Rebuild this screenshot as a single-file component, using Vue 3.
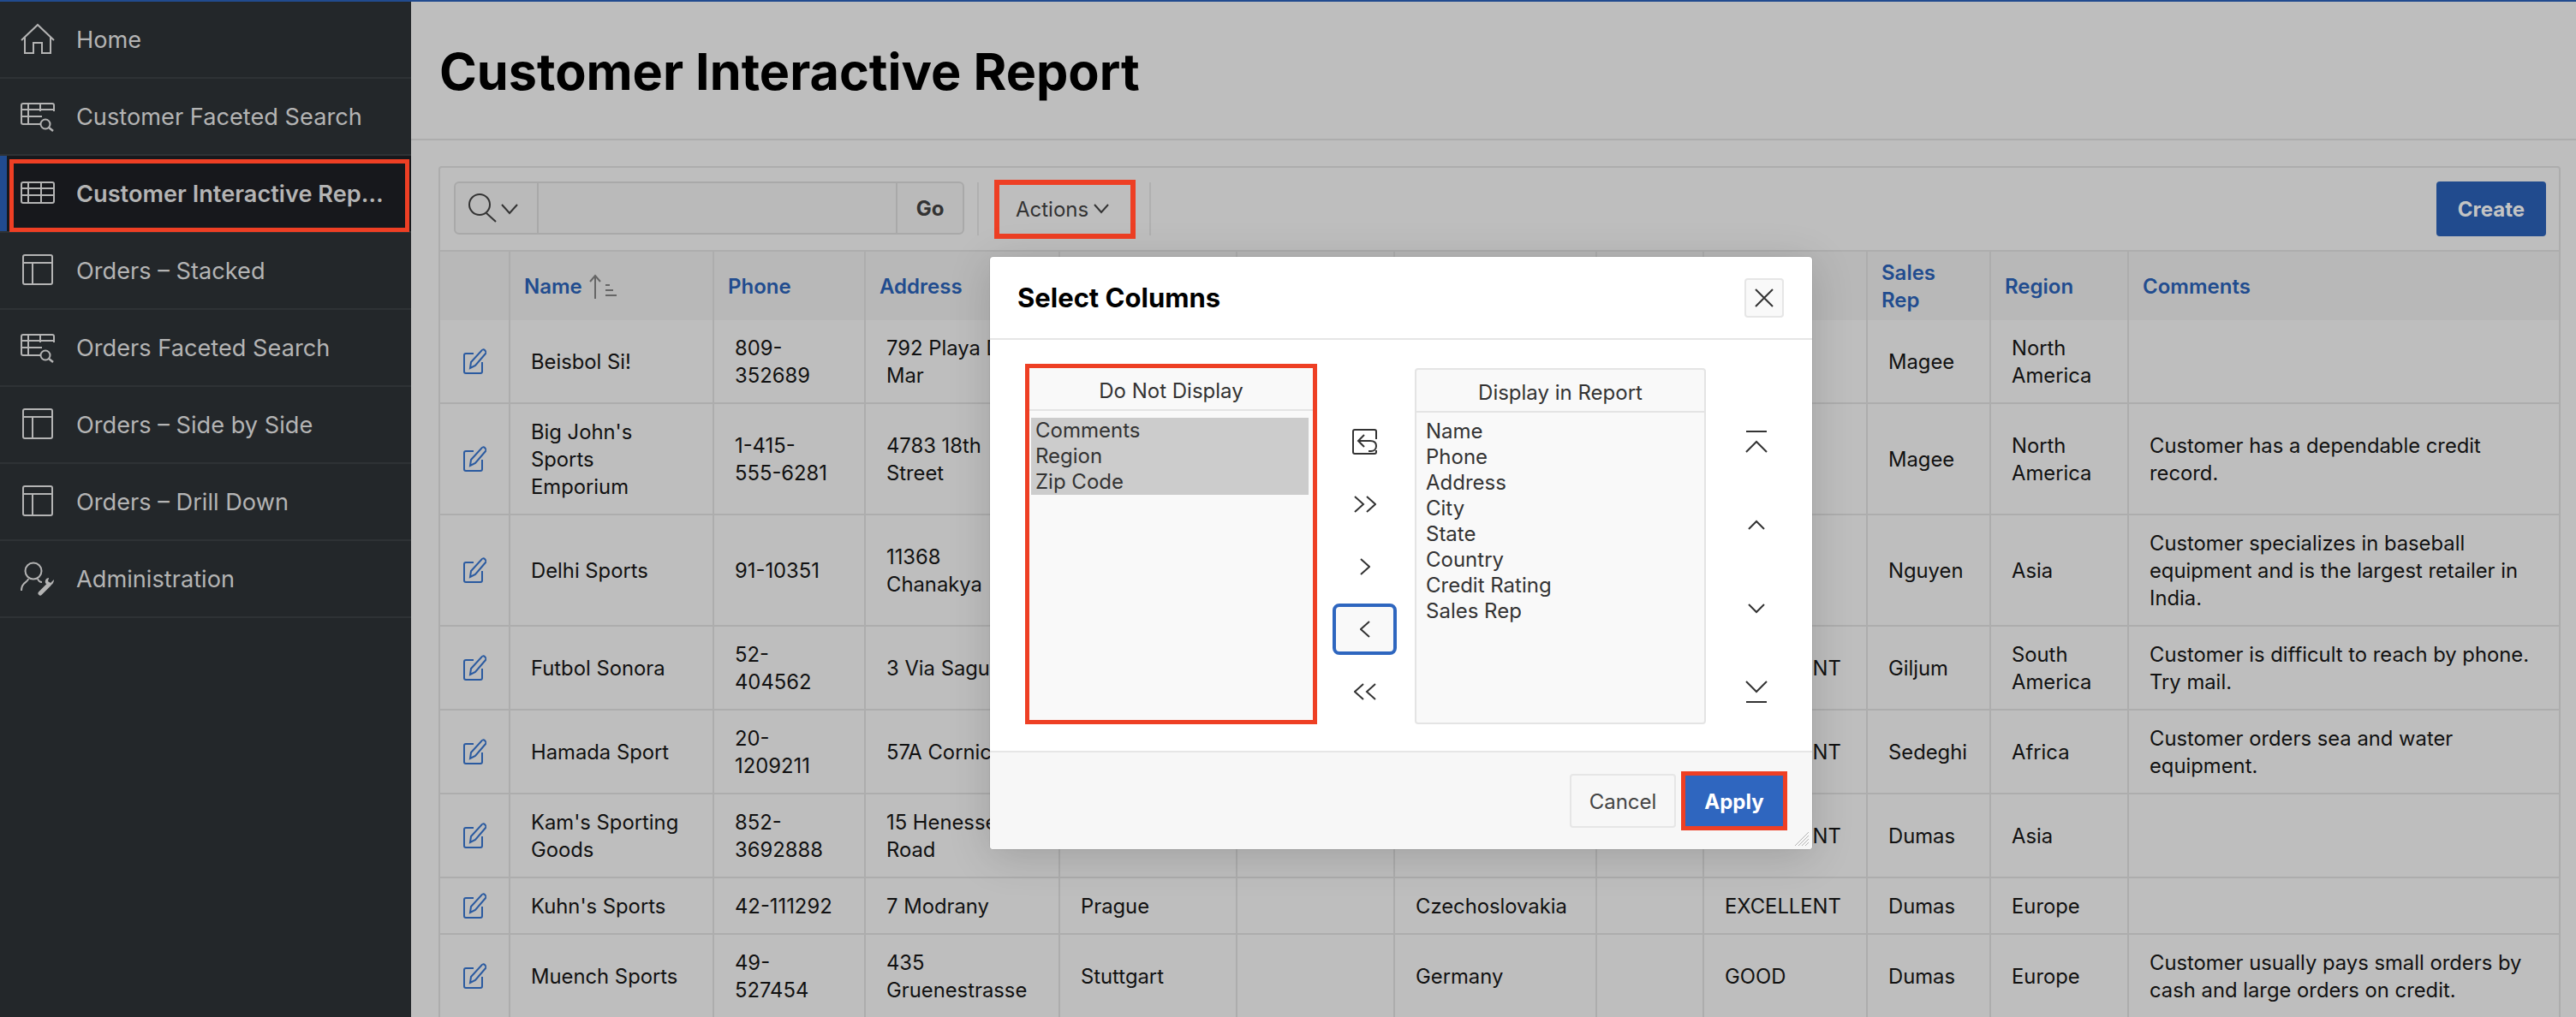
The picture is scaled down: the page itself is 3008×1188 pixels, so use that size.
<template>
  <div class="page">
    <div class="topline"></div>
    <div class="shell">
      <aside class="sidebar">
        <div
          v-for="item in navItems"
          :key="item.label"
          class="nav-item"
          :class="{ active: item.active }"
        >
          <svg class="nav-icon" viewBox="0 0 40 40" fill="none" stroke="currentColor" stroke-width="2">
            <template v-if="item.icon === 'home'">
              <path d="M1 21 20 3l19 18" />
              <path d="M5 17v19h10V24h10v12h10V17" />
            </template>
            <template v-if="item.icon === 'search'">
              <path d="M23 29H3a2 2 0 0 1-2-2V7a2 2 0 0 1 2-2h34a2 2 0 0 1 2 2v7" />
              <path d="M1 12h38M1 20h24M9 5v24M23 5v9" />
              <circle cx="29" cy="29" r="5.5" />
              <path d="m33 33 5 4" stroke-width="2.5" />
            </template>
            <template v-if="item.icon === 'table'">
              <rect x="1" y="7" width="38" height="24" rx="2" />
              <path d="M1 14h38M1 22h38M9 7v24M24 7v24" />
            </template>
            <template v-if="item.icon === 'layout'">
              <rect x="3" y="2" width="34" height="34" rx="2" />
              <path d="M3 11h34M14 11v25" />
            </template>
            <template v-if="item.icon === 'admin'">
              <circle cx="15" cy="11" r="9.5" />
              <path d="M9 20c0 5-8 3-8 14M20 20c1 3 3 4 5 4" />
              <path d="m23 37 10-10" stroke-width="5" stroke-linecap="round" />
              <path d="M29 25c-1-4 2-6 4-6l-1 4 3 2 4-4c0 4-3 8-7 7z" fill="currentColor" stroke="none" />
            </template>
          </svg>
          <span class="nav-label">{{ item.label }}</span>
        </div>
      </aside>

      <main class="content">
        <header class="page-header">
          <h1>Customer Interactive Report</h1>
        </header>

        <section class="region">
          <div class="toolbar">
            <div class="search">
              <div class="search-col">
                <svg width="58" height="34" viewBox="0 0 58 34" fill="none" stroke="#333" stroke-width="2">
                  <circle cx="13" cy="13" r="12" />
                  <path d="m21 23 11 10" />
                  <path d="m39 13 9 10 9-10" />
                </svg>
              </div>
              <div class="search-input"></div>
              <div class="search-go">Go</div>
            </div>
            <div class="actions-wrap">
              <div class="actions-btn">
                Actions
                <svg width="18" height="12" viewBox="0 0 18 12" fill="none" stroke="#333" stroke-width="2">
                  <path d="m1 1 8 9 8-9" />
                </svg>
              </div>
            </div>
            <button class="create">Create</button>
          </div>

          <table class="report">
            <colgroup>
              <col v-for="(w, i) in colWidths" :key="i" :style="{ width: w + 'px' }" />
            </colgroup>
            <thead>
              <tr>
                <th></th>
                <th>
                  <span class="name-head">
                    Name
                    <svg width="32" height="30" viewBox="0 0 32 30" fill="none" stroke="#666" stroke-width="2">
                      <path d="M7 29V2M1 9l6-7 6 7" />
                      <path d="M19 13h5M19 19h9M19 25h13" />
                    </svg>
                  </span>
                </th>
                <th>Phone</th>
                <th>Address</th>
                <th>City</th>
                <th>State</th>
                <th>Country</th>
                <th></th>
                <th>Credit<br />Rating</th>
                <th>Sales Rep</th>
                <th>Region</th>
                <th>Comments</th>
              </tr>
            </thead>
            <tbody>
              <tr v-for="row in rows" :key="row.name">
                <td class="edit-cell">
                  <svg width="28" height="30" viewBox="0 0 28 30" fill="none" stroke="#2a5aa0" stroke-width="2">
                    <path d="M13 6H4a2 2 0 0 0-2 2v19a2 2 0 0 0 2 2h17a2 2 0 0 0 2-2V16" />
                    <path d="m9 23 1-7L22 3c1-2 3-2 4-1s2 3 1 4L15 20z" />
                  </svg>
                </td>
                <td>{{ row.name }}</td>
                <td class="phone">{{ row.phone }}</td>
                <td>{{ row.address }}</td>
                <td>{{ row.city }}</td>
                <td></td>
                <td>{{ row.country }}</td>
                <td></td>
                <td>{{ row.rating }}</td>
                <td>{{ row.rep }}</td>
                <td>{{ row.region }}</td>
                <td>{{ row.comments }}</td>
              </tr>
            </tbody>
          </table>
        </section>
      </main>
    </div>

    <div class="dialog">
      <div class="dialog-head">
        <h2>Select Columns</h2>
        <button class="close">
          <svg width="22" height="22" viewBox="0 0 22 22" fill="none" stroke="#333" stroke-width="2">
            <path d="m1 1 20 20M21 1 1 21" />
          </svg>
        </button>
      </div>

      <div class="dialog-body">
        <div class="panel panel-left">
          <div class="panel-title">Do Not Display</div>
          <div class="panel-list">
            <div class="selected">
              <div v-for="col in hiddenCols" :key="col">{{ col }}</div>
            </div>
          </div>
        </div>

        <div class="shuttle">
          <button class="shuttle-btn">
            <svg width="30" height="30" viewBox="0 0 30 30" fill="none" stroke="#333" stroke-width="2">
              <path d="M28 12V3a2 2 0 0 0-2-2H3a2 2 0 0 0-2 2v24a2 2 0 0 0 2 2h23c2 0 2-1 2-2v-2" />
              <path d="M14 7 7 14l7 7" />
              <path d="M7 14h14c4 0 7 2 7 6s-3 6-6 6h-3" />
            </svg>
          </button>
          <button class="shuttle-btn">
            <svg width="26" height="20" viewBox="0 0 26 20" fill="none" stroke="#333" stroke-width="2">
              <path d="m1 1 10 9-10 9M15 1l10 9-10 9" />
            </svg>
          </button>
          <button class="shuttle-btn">
            <svg width="12" height="20" viewBox="0 0 12 20" fill="none" stroke="#333" stroke-width="2">
              <path d="m1 1 10 9-10 9" />
            </svg>
          </button>
          <button class="shuttle-btn focused">
            <svg width="12" height="20" viewBox="0 0 12 20" fill="none" stroke="#333" stroke-width="2">
              <path d="M11 1 1 10l10 9" />
            </svg>
          </button>
          <button class="shuttle-btn">
            <svg width="26" height="20" viewBox="0 0 26 20" fill="none" stroke="#333" stroke-width="2">
              <path d="M11 1 1 10l10 9M25 1l-10 9 10 9" />
            </svg>
          </button>
        </div>

        <div class="panel panel-right">
          <div class="panel-title">Display in Report</div>
          <div class="panel-list shown">
            <div v-for="col in shownCols" :key="col">{{ col }}</div>
          </div>
        </div>

        <div class="order">
          <button class="shuttle-btn">
            <svg width="26" height="26" viewBox="0 0 26 26" fill="none" stroke="#333" stroke-width="2">
              <path d="M1 1h24M1 25l12-12 12 12" />
            </svg>
          </button>
          <button class="shuttle-btn">
            <svg width="20" height="12" viewBox="0 0 20 12" fill="none" stroke="#333" stroke-width="2">
              <path d="m1 11 9-9 9 9" />
            </svg>
          </button>
          <button class="shuttle-btn">
            <svg width="20" height="12" viewBox="0 0 20 12" fill="none" stroke="#333" stroke-width="2">
              <path d="m1 1 9 9 9-9" />
            </svg>
          </button>
          <button class="shuttle-btn">
            <svg width="26" height="26" viewBox="0 0 26 26" fill="none" stroke="#333" stroke-width="2">
              <path d="m1 1 12 12L25 1M1 25h24" />
            </svg>
          </button>
        </div>
      </div>

      <div class="dialog-foot">
        <button class="cancel">Cancel</button>
        <button class="apply">Apply</button>
      </div>
      <svg class="grip" width="16" height="16" viewBox="0 0 16 16" fill="none" stroke="#b5b5b5" stroke-width="1">
        <path d="M16 0 0 16M16 4 4 16M16 8 8 16M16 12l-4 4" />
      </svg>
    </div>
  </div>
</template>

<script setup>
const navItems = [
  { label: "Home", icon: "home" },
  { label: "Customer Faceted Search", icon: "search" },
  { label: "Customer Interactive Report", icon: "table", active: true },
  { label: "Orders – Stacked", icon: "layout" },
  { label: "Orders Faceted Search", icon: "search" },
  { label: "Orders – Side by Side", icon: "layout" },
  { label: "Orders – Drill Down", icon: "layout" },
  { label: "Administration", icon: "admin" },
];

const colWidths = [81, 238, 177, 227, 207, 184, 236, 125, 191, 144, 161, 503];

const rows = [
  { name: "Beisbol Si!", phone: "809-\n352689", address: "792 Playa Del Mar", rep: "Magee", region: "North America", comments: "" },
  { name: "Big John's Sports Emporium", phone: "1-415-\n555-6281", address: "4783 18th Street", rep: "Magee", region: "North America", comments: "Customer has a dependable credit record." },
  { name: "Delhi Sports", phone: "91-10351", address: "11368 Chanakya", rep: "Nguyen", region: "Asia", comments: "Customer specializes in baseball equipment and is the largest retailer in India." },
  { name: "Futbol Sonora", phone: "52-\n404562", address: "3 Via Saguaro", rating: "EXCELLENT", rep: "Giljum", region: "South America", comments: "Customer is difficult to reach by phone. Try mail." },
  { name: "Hamada Sport", phone: "20-\n1209211", address: "57A Corniche", rating: "EXCELLENT", rep: "Sedeghi", region: "Africa", comments: "Customer orders sea and water equipment." },
  { name: "Kam's Sporting Goods", phone: "852-\n3692888", address: "15 Henessey Road", rating: "EXCELLENT", rep: "Dumas", region: "Asia", comments: "" },
  { name: "Kuhn's Sports", phone: "42-111292", address: "7 Modrany", city: "Prague", country: "Czechoslovakia", rating: "EXCELLENT", rep: "Dumas", region: "Europe", comments: "" },
  { name: "Muench Sports", phone: "49-\n527454", address: "435 Gruenestrasse", city: "Stuttgart", country: "Germany", rating: "GOOD", rep: "Dumas", region: "Europe", comments: "Customer usually pays small orders by cash and large orders on credit." },
];

const hiddenCols = ["Comments", "Region", "Zip Code"];
const shownCols = ["Name", "Phone", "Address", "City", "State", "Country", "Credit Rating", "Sales Rep"];
</script>

<style>
html,
body {
  margin: 0;
  overflow: hidden;
}
</style>

<style scoped>
.page {
  position: relative;
  width: 3008px;
  height: 1188px;
  overflow: hidden;
  font-family: Inter, "Liberation Sans", sans-serif;
  font-size: 24px;
  color: #111;
  background: #bebebe;
}

.topline {
  height: 2px;
  background: #214b8f;
}

.shell {
  display: flex;
  height: 1186px;
}

.sidebar {
  width: 480px;
  flex-shrink: 0;
  background: #23272a;
  color: #b4b4b4;
}

.nav-item {
  display: flex;
  align-items: center;
  gap: 25px;
  box-sizing: border-box;
  height: 90px;
  padding: 0 20px 0 24px;
  border-bottom: 2px solid #2e3235;
  font-size: 27.2px;
}

.nav-icon {
  width: 40px;
  height: 40px;
  flex-shrink: 0;
}

.nav-label {
  overflow: hidden;
  white-space: nowrap;
  text-overflow: ellipsis;
}

.active {
  position: relative;
  font-weight: 600;
  background: #17181c;
  box-shadow: inset 8px 0 0 #214b8f;
}

.active::after {
  content: "";
  position: absolute;
  left: 11px;
  top: 4px;
  right: 2px;
  bottom: -1px;
  border: 5px solid #ee3f24;
}

.active .nav-label {
  max-width: 368px;
}

.content {
  flex: 1;
  min-width: 0;
}

.page-header {
  box-sizing: border-box;
  height: 162px;
  padding-left: 33px;
  border-bottom: 2px solid #adadad;
}

h1 {
  margin: 0;
  padding-top: 46px;
  font-size: 59.3px;
  line-height: 72px;
  font-weight: 700;
  color: #000;
}

.region {
  margin: 30px 18px 0 32px;
  border: 2px solid #adadad;
  border-radius: 4px 4px 0 0;
}

.toolbar {
  display: flex;
  align-items: center;
  height: 96px;
  padding: 0 15px 0 16px;
  border-bottom: 2px solid #adadad;
}

.search {
  display: flex;
  box-sizing: border-box;
  width: 596px;
  height: 62px;
  margin-bottom: 2px;
  border: 2px solid #a9a9a9;
  border-radius: 6px;
  background: #bababa;
}

.search-col {
  display: flex;
  align-items: center;
  box-sizing: border-box;
  width: 97px;
  padding-left: 15px;
  border-right: 2px solid #a9a9a9;
}

.search-input {
  flex: 1;
  border-right: 2px solid #a9a9a9;
}

.search-go {
  display: flex;
  align-items: center;
  justify-content: center;
  width: 76px;
  font-weight: 700;
  color: #333;
}

.actions-wrap {
  display: flex;
  align-items: center;
  height: 62px;
  margin-left: 15px;
  padding: 0 16px 0 18px;
  border-left: 2px solid #b0b0b0;
  border-right: 2px solid #b0b0b0;
}

.actions-btn {
  display: flex;
  align-items: center;
  gap: 6px;
  box-sizing: border-box;
  width: 165px;
  height: 69px;
  padding-left: 19px;
  border: 6px solid #ee3f24;
  color: #333;
}

.create {
  width: 128px;
  height: 64px;
  margin-left: auto;
  border: none;
  border-radius: 4px;
  background: #214b8e;
  color: #c4c4c4;
  font: 700 24px Inter, "Liberation Sans", sans-serif;
}

.report {
  width: 2474px;
  table-layout: fixed;
  border-collapse: collapse;
  line-height: 32px;
  font-size: 23.8px;
}

.report th {
  height: 78px;
  padding: 2px 16px 0;
  background: #b8b8b8;
  border-right: 2px solid #adadad;
  border-bottom: none;
  color: #214c8f;
  font-size: 24px;
  font-weight: 600;
  text-align: left;
}

.name-head {
  display: inline-flex;
  align-items: center;
  gap: 8px;
}

.report td {
  padding: 17px 24px 15px;
  border-right: 2px solid #adadad;
  border-bottom: 2px solid #adadad;
  overflow: visible;
}

.report .phone {
  white-space: pre-line;
}

.report th:last-child,
.report td:last-child {
  border-right: none;
}

.report .edit-cell {
  padding: 16px 0 16px 26px;
}

.edit-cell svg {
  display: block;
}

.dialog {
  position: absolute;
  left: 1156px;
  top: 300px;
  display: flex;
  flex-direction: column;
  width: 960px;
  height: 692px;
  border-radius: 4px;
  background: #fff;
  box-shadow: 0 8px 50px rgba(0, 0, 0, 0.16), 0 0 0 1px rgba(0, 0, 0, 0.08);
}

.dialog-head {
  display: flex;
  align-items: center;
  justify-content: space-between;
  box-sizing: border-box;
  height: 97px;
  padding: 0 33px 0 32px;
  border-bottom: 2px solid #e6e6e6;
}

h2 {
  margin: 0;
  font-size: 31px;
  font-weight: 700;
  color: #000;
}

.close {
  display: flex;
  align-items: center;
  justify-content: center;
  box-sizing: border-box;
  width: 46px;
  height: 46px;
  padding: 0;
  border: 2px solid #e6e6e6;
  border-radius: 4px;
  background: #f9f9f9;
}

.dialog-body {
  display: flex;
  align-items: flex-end;
  box-sizing: border-box;
  height: 482px;
  padding: 28px 0 31px 41px;
  border-bottom: 2px solid #e6e6e6;
}

.panel {
  display: flex;
  flex-direction: column;
  box-sizing: border-box;
  background: #f9f9f9;
  color: #333;
}

.panel-left {
  width: 341px;
  height: 421px;
  border: 5px solid #ee3f24;
}

.panel-right {
  width: 340px;
  height: 416px;
  border: 2px solid #e4e4e4;
  border-radius: 4px;
}

.panel-title {
  box-sizing: border-box;
  height: 50px;
  line-height: 54px;
  border-bottom: 2px solid #e4e4e4;
  text-align: center;
}

.panel-list {
  flex: 1;
  padding: 8px 5px 0 2px;
  line-height: 30px;
}

.selected {
  padding-left: 5px;
  background: #ccc;
}

.shown {
  padding: 7px 0 0 11px;
}

.shuttle {
  display: flex;
  flex-direction: column;
  gap: 13px;
  height: 352px;
  margin: 0 21px 8px 18px;
}

.order {
  display: flex;
  flex-direction: column;
  justify-content: space-between;
  height: 352px;
  margin: 0 0 8px 21px;
}

.shuttle-btn {
  display: flex;
  align-items: center;
  justify-content: center;
  box-sizing: border-box;
  width: 75px;
  height: 60px;
  padding: 0;
  border: 4px solid transparent;
  border-radius: 8px;
  background: none;
}

.focused {
  border-color: #2e66bf;
  background: #f9f9f9;
}

.dialog-foot {
  flex: 1;
  display: flex;
  align-items: center;
  justify-content: flex-end;
  gap: 6px;
  padding-right: 29px;
  border-radius: 0 0 4px 4px;
  background: #f7f7f7;
}

.cancel,
.apply {
  box-sizing: border-box;
  width: 124px;
  padding: 2px 0 0;
  font: 400 24px Inter, "Liberation Sans", sans-serif;
}

.cancel {
  height: 63px;
  border: 2px solid #e6e6e6;
  border-radius: 4px;
  background: #f7f7f7;
  color: #444;
}

.apply {
  height: 69px;
  border: 5px solid #ee3f24;
  background: #2f66bf;
  color: #fff;
  font-weight: 700;
}

.grip {
  position: absolute;
  right: 4px;
  bottom: 4px;
}
</style>
